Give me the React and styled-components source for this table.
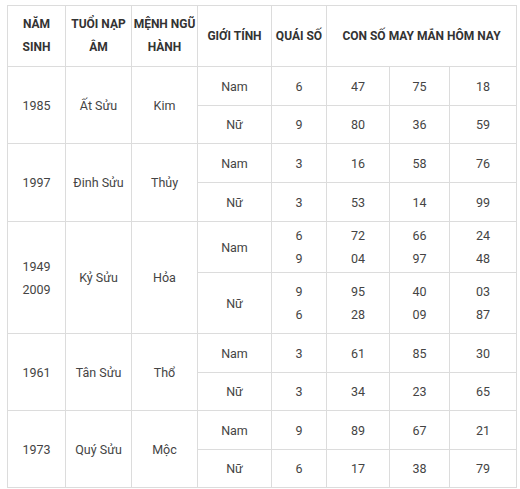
import React from "react";
import styled, { createGlobalStyle } from "styled-components";

const GlobalStyle = createGlobalStyle`
  body {
    margin: 0;
    background: #fff;
    font-family: Roboto, "Noto Sans", sans-serif;
  }
`;

const data = [
  {
    year: ["1985"],
    tuoi: "Ất Sửu",
    menh: "Kim",
    rows: [
      { sex: "Nam", quai: ["6"], nums: [["47"], ["75"], ["18"]], h: 39 },
      { sex: "Nữ", quai: ["9"], nums: [["80"], ["36"], ["59"]], h: 38 },
    ],
  },
  {
    year: ["1997"],
    tuoi: "Đinh Sửu",
    menh: "Thủy",
    rows: [
      { sex: "Nam", quai: ["3"], nums: [["16"], ["58"], ["76"]], h: 39 },
      { sex: "Nữ", quai: ["3"], nums: [["53"], ["14"], ["99"]], h: 39 },
    ],
  },
  {
    year: ["1949", "2009"],
    tuoi: "Kỷ Sửu",
    menh: "Hỏa",
    rows: [
      {
        sex: "Nam",
        quai: ["6", "9"],
        nums: [["72", "04"], ["66", "97"], ["24", "48"]],
        h: 51,
      },
      {
        sex: "Nữ",
        quai: ["9", "6"],
        nums: [["95", "28"], ["40", "09"], ["03", "87"]],
        h: 61,
      },
    ],
  },
  {
    year: ["1961"],
    tuoi: "Tân Sửu",
    menh: "Thổ",
    rows: [
      { sex: "Nam", quai: ["3"], nums: [["61"], ["85"], ["30"]], h: 39 },
      { sex: "Nữ", quai: ["3"], nums: [["34"], ["23"], ["65"]], h: 38 },
    ],
  },
  {
    year: ["1973"],
    tuoi: "Quý Sửu",
    menh: "Mộc",
    rows: [
      { sex: "Nam", quai: ["9"], nums: [["89"], ["67"], ["21"]], h: 39 },
      { sex: "Nữ", quai: ["6"], nums: [["17"], ["38"], ["79"]], h: 38 },
    ],
  },
];

const widths = [58, 66, 66, 74, 55, 63, 60, 67];

const Lines = ({ items }) =>
  items.map((t, i) => (
    <React.Fragment key={i}>
      {i > 0 && <br />}
      {t}
    </React.Fragment>
  ));

export default function App() {
  return (
    <>
      <GlobalStyle />
      <Wrap>
        <Table>
          <colgroup>
            {widths.map((w, i) => (
              <col key={i} style={{ width: w }} />
            ))}
          </colgroup>
          <thead>
            <Row $h={61}>
              <Head>
                NĂM
                <br />
                SINH
              </Head>
              <Head>
                TUỔI NẠP
                <br />
                ÂM
              </Head>
              <Head>
                MỆNH NGŨ
                <br />
                HÀNH
              </Head>
              <Head>GIỚI TÍNH</Head>
              <Head>QUÁI SỐ</Head>
              <Head colSpan={3}>CON SỐ MAY MẮN HÔM NAY</Head>
            </Row>
          </thead>
          <tbody>
            {data.map((g) =>
              g.rows.map((r, i) => (
                <Row key={g.tuoi + r.sex} $h={r.h}>
                  {i === 0 && (
                    <>
                      <Cell rowSpan={2}>
                        <Lines items={g.year} />
                      </Cell>
                      <Cell rowSpan={2}>{g.tuoi}</Cell>
                      <Cell rowSpan={2}>{g.menh}</Cell>
                    </>
                  )}
                  <Cell>{r.sex}</Cell>
                  <Cell>
                    <Lines items={r.quai} />
                  </Cell>
                  {r.nums.map((n, k) => (
                    <Cell key={k}>
                      <Lines items={n} />
                    </Cell>
                  ))}
                </Row>
              ))
            )}
          </tbody>
        </Table>
      </Wrap>
    </>
  );
}

const Wrap = styled.div`
  padding: 5px 0 0 7px;
`;

const Table = styled.table`
  width: 509px;
  border-collapse: collapse;
  table-layout: fixed;
  border: 1px solid #dcdcdc;
`;

const Row = styled.tr`
  height: ${(p) => p.$h}px;
`;

const Head = styled.th`
  border: 1px solid #dcdcdc;
  padding: 0;
  font-size: 12px;
  font-weight: 700;
  line-height: 23px;
  color: #333;
  text-align: center;
  vertical-align: middle;
  white-space: nowrap;
`;

const Cell = styled.td`
  border: 1px solid #dcdcdc;
  padding: 0;
  font-size: 12.5px;
  line-height: 23px;
  color: #444;
  text-align: center;
  vertical-align: middle;
`;
